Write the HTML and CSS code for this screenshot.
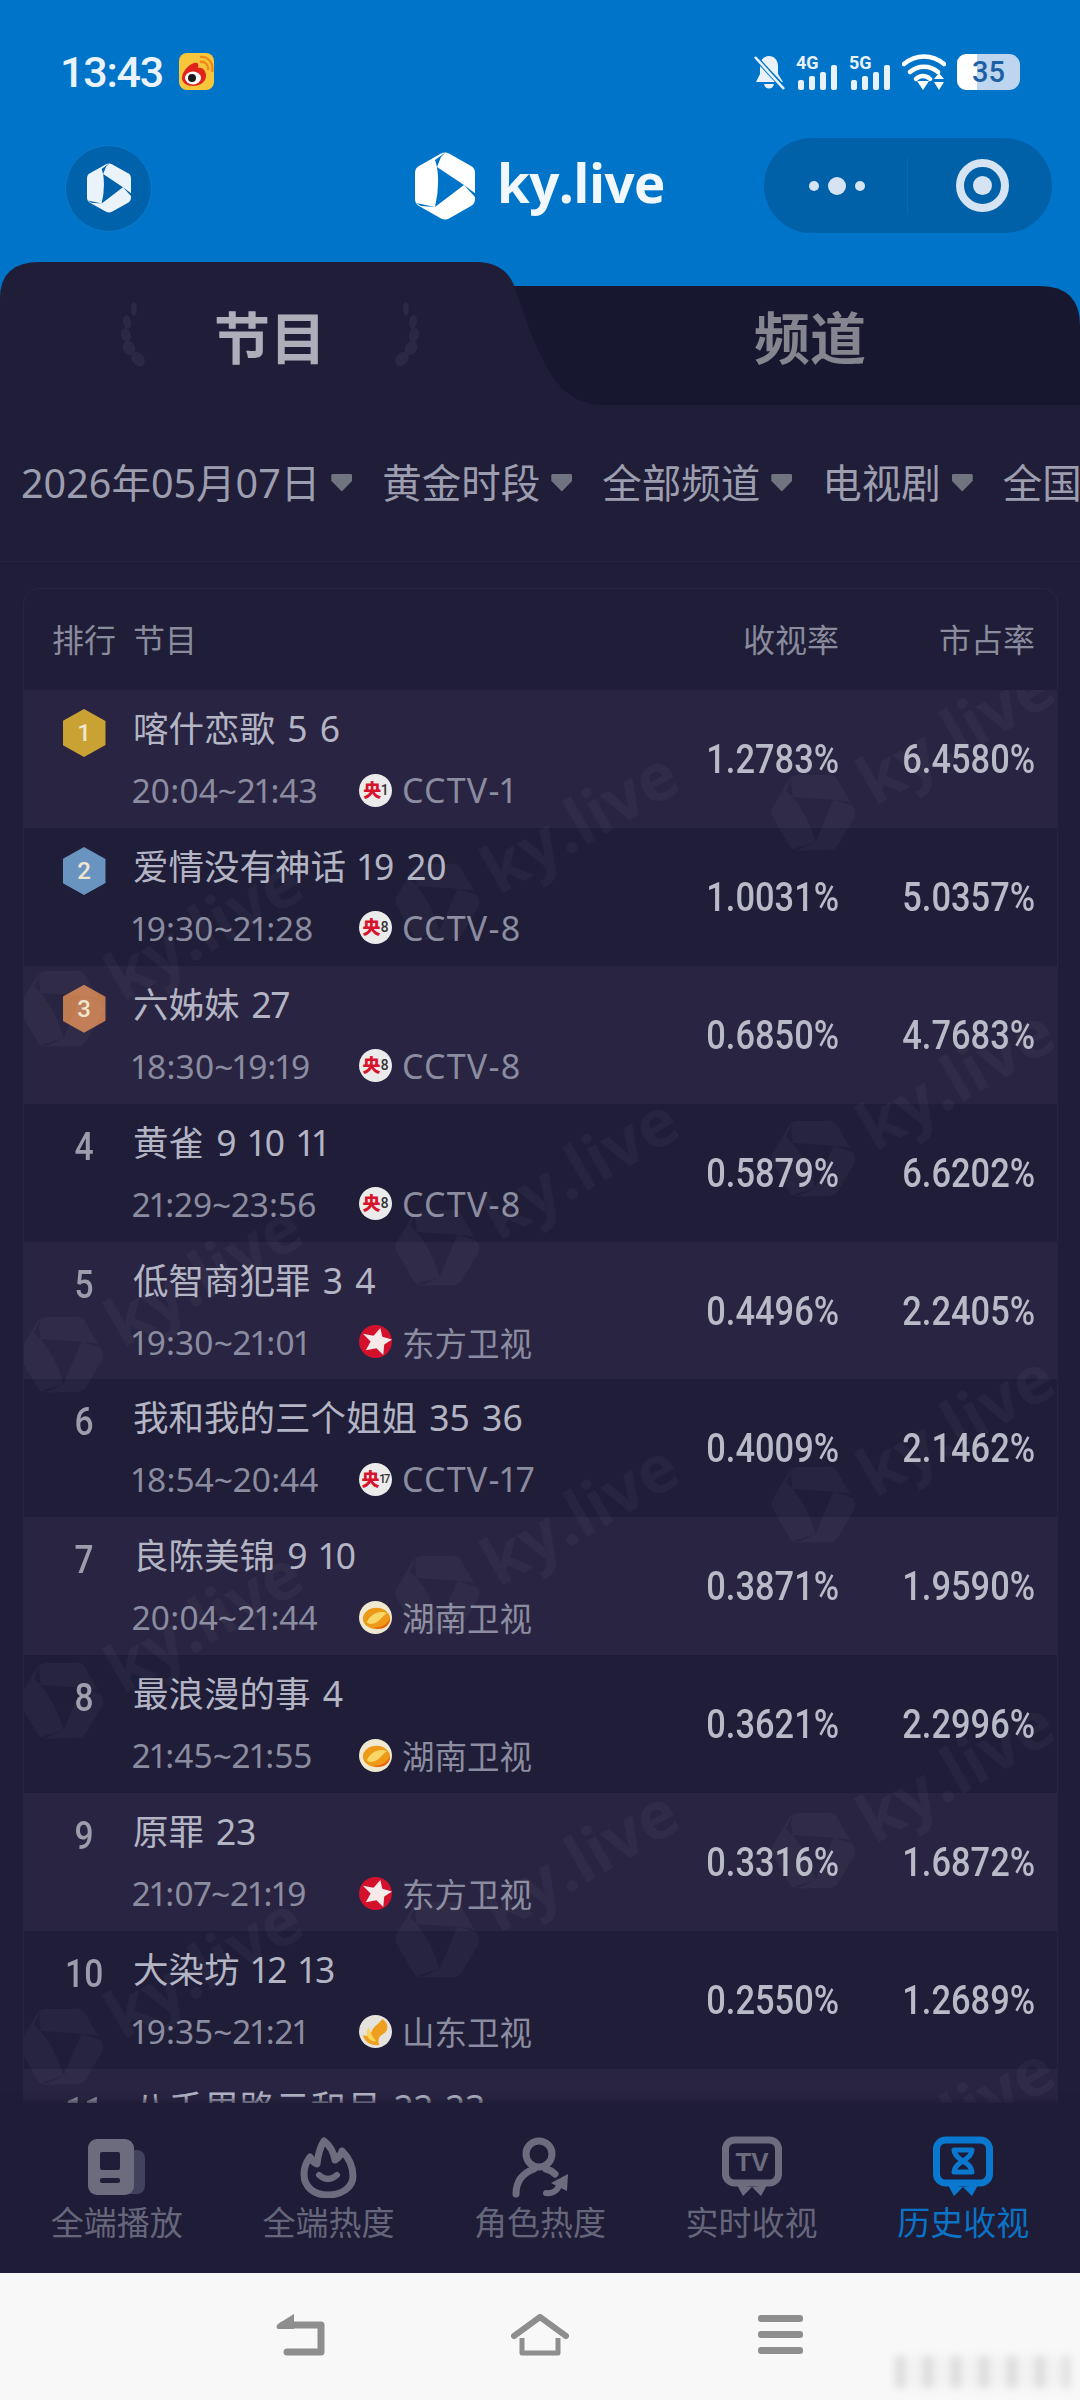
FILE: index.html
```html
<!DOCTYPE html>
<html lang="zh-CN">
<head>
    <meta charset="UTF-8">
    <meta name="viewport" content="width=device-width, initial-scale=1.0">
    <title>ky.live 历史收视</title>
    <link rel="stylesheet" href="styles.css">
</head>
<body>

<svg class="defs" width="0" height="0">
    <symbol id="logo" viewBox="0 0 60 68">
        <path fill="currentColor" fill-rule="evenodd" d="M26 1.5Q30 -.5 34 1.5L56 14Q60 16 60 21V47Q60 52 56 54L34 66.5Q30 68.5 26 66.5L4 54Q0 52 0 47V21Q0 16 4 14ZM22 15L49 33L20 55Q25 34 22 15ZM22 15L20 8L31 0L26 5ZM49 33L61 42V46ZM20 55L1 51L6 54Z"/>
    </symbol>
    <symbol id="star" viewBox="0 0 34 34">
        <circle cx="17" cy="17" r="17" fill="#d3112c"/>
        <path fill="#f6e9ea" d="M22 3L24 12L34 15L26 20L25 31L18 24L7 26L12 17L4 9L15 11Z"/>
    </symbol>
    <symbol id="mango" viewBox="0 0 34 34">
        <circle cx="17" cy="17" r="17" fill="#efe9d2"/>
        <ellipse cx="18" cy="18" rx="14" ry="11" fill="#ec9a17"/>
        <path fill="#f9d766" d="M8 22C12 13 22 9 29 13C25 14 22 21 16 23C13 24 10 24 8 22Z"/>
        <path fill="#e8650f" d="M15 27C23 28 30 24 32 17C33 25 24 32 15 27Z"/>
    </symbol>
    <symbol id="shandong" viewBox="0 0 34 34">
        <circle cx="17" cy="17" r="17" fill="#e6e2dc"/>
        <path fill="#ee9f1e" d="M24 4C31 8 31 17 24 20C20 22 19 27 21 31C12 32 5 27 4 20C8 23 12 21 13 17C15 11 20 10 24 4Z"/>
        <path fill="#f9d55a" d="M10 13C12 18 13 22 18 27C13 28 8 24 8 18C8 16 9 14 10 13Z"/>
    </symbol>
</svg>

<div class="page">

    <header class="top">
        <div class="status">
            <div class="status-left">
                <span class="clock">13:43</span>
                <svg class="weibo" viewBox="0 0 35 37">
                    <rect width="35" height="37" rx="8" fill="#f7c63a"/>
                    <path fill="#e0241b" d="M27 23C27 30 19 33 14 33C8 33 3 30 3 25C3 19 9 12 15 10C19 9 20 11 19 15C23 14 27 17 27 23Z"/>
                    <ellipse cx="14" cy="25" rx="8" ry="6.5" fill="#fff"/>
                    <circle cx="13" cy="25" r="4" fill="#1b1b1b"/>
                    <path fill="none" stroke="#f08a1d" stroke-width="2.4" d="M21 9C26 8 30 12 29 17M21 4C29 3 35 10 33 19"/>
                </svg>
            </div>
            <div class="status-right">
                <svg class="bell" viewBox="0 0 31 36">
                    <path fill="#e9f2fb" d="M15 2C20 2 24 6 24 12V20L29 28H2L6 20V12C6 6 10 2 15 2ZM10 30H20C19 36 11 36 10 30Z"/>
                    <path stroke="#0074c8" stroke-width="5" d="M0 2L30 34"/>
                    <path stroke="#e9f2fb" stroke-width="2.6" d="M1 3L30 35"/>
                </svg>
                <svg class="signal" viewBox="0 0 42 36">
                    <text class="net" x="0" y="15">4G</text>
                    <rect x="2" y="26" width="6" height="10" rx="2"/>
                    <rect x="13" y="22" width="6" height="14" rx="2"/>
                    <rect x="24" y="18" width="6" height="18" rx="2"/>
                    <rect x="35" y="11" width="6" height="25" rx="2"/>
                </svg>
                <svg class="signal" viewBox="0 0 42 36">
                    <text class="net" x="0" y="15">5G</text>
                    <rect x="2" y="26" width="6" height="10" rx="2"/>
                    <rect x="13" y="22" width="6" height="14" rx="2"/>
                    <rect x="24" y="18" width="6" height="18" rx="2"/>
                    <rect x="35" y="11" width="6" height="25" rx="2"/>
                </svg>
                <svg class="wifi" viewBox="0 0 44 36">
                    <path fill="none" stroke="#fff" stroke-width="4.4" stroke-linecap="round" d="M2 10C14 0 30 0 42 10M8 18C16 11 28 11 36 18M14 25C18 21 24 21 28 25"/>
                    <path fill="#fff" d="M15 27H27L21 36ZM32 25L37 19L42 25ZM32 28H42L37 36Z"/>
                </svg>
                <div class="battery"><span>35</span></div>
            </div>
        </div>

        <div class="appbar">
            <div class="app-round"><svg class="app-round-logo"><use href="#logo"/></svg></div>
            <div class="brand">
                <svg class="brand-logo"><use href="#logo"/></svg>
                <span class="brand-name">ky.live</span>
            </div>
            <div class="capsule">
                <div class="capsule-side">
                    <i class="dot"></i><i class="dot dot-big"></i><i class="dot"></i>
                </div>
                <div class="capsule-side capsule-right"><i class="target"></i></div>
            </div>
        </div>

        <div class="tabs">
            <svg class="tabs-bg" viewBox="0 0 1080 143">
                <path fill="#181730" d="M490 24H1040Q1080 24 1080 64V143H490Z"/>
                <path fill="#1f1d37" d="M0 143V36Q0 0 40 0H476Q503 0 513 21C525 50 531 82 555 118C568 136 585 143 606 143Z"/>
            </svg>
            <div class="tab tab-active">
                <svg class="laurel" viewBox="0 0 30 64">
                    <ellipse cx="16" cy="7" rx="3" ry="7"/>
                    <ellipse cx="9" cy="20" rx="4" ry="7" transform="rotate(-8 9 20)"/>
                    <ellipse cx="8" cy="33" rx="5" ry="7" transform="rotate(-15 8 33)"/>
                    <ellipse cx="11" cy="46" rx="6" ry="7.5" transform="rotate(-25 11 46)"/>
                    <ellipse cx="20" cy="57" rx="6" ry="8" transform="rotate(-40 20 57)"/>
                </svg>
                <span>节目</span>
                <svg class="laurel laurel-flip" viewBox="0 0 30 64">
                    <ellipse cx="16" cy="7" rx="3" ry="7"/>
                    <ellipse cx="9" cy="20" rx="4" ry="7" transform="rotate(-8 9 20)"/>
                    <ellipse cx="8" cy="33" rx="5" ry="7" transform="rotate(-15 8 33)"/>
                    <ellipse cx="11" cy="46" rx="6" ry="7.5" transform="rotate(-25 11 46)"/>
                    <ellipse cx="20" cy="57" rx="6" ry="8" transform="rotate(-40 20 57)"/>
                </svg>
            </div>
            <div class="tab">频道</div>
        </div>
    </header>

    <main class="content">
        <div class="filters">
            <div class="filter">2026年05月07日<i class="caret"></i></div>
            <div class="filter">黄金时段<i class="caret"></i></div>
            <div class="filter">全部频道<i class="caret"></i></div>
            <div class="filter">电视剧<i class="caret"></i></div>
            <div class="filter">全国</div>
        </div>

        <div class="table">
            <div class="thead">
                <div class="thead-left"><span class="thead-rank">排行</span><span>节目</span></div>
                <div class="num-head">收视率</div>
                <div class="num-head">市占率</div>
            </div>

            <div class="rows">
                <div class="row">
                    <div class="main">
                        <div class="rank"><span class="medal gold">1</span></div>
                        <div class="info">
                            <div class="title">喀什恋歌 5 6</div>
                            <div class="sub"><span class="time">20:04~21:43</span><span class="ch-logo"><b>央</b><i>1</i></span><span class="ch-en">CCTV-1</span></div>
                        </div>
                    </div>
                    <div class="num"><span>1.2783%</span></div>
                    <div class="num"><span>6.4580%</span></div>
                </div>
                <div class="row">
                    <div class="main">
                        <div class="rank"><span class="medal silver">2</span></div>
                        <div class="info">
                            <div class="title">爱情没有神话 19 20</div>
                            <div class="sub"><span class="time">19:30~21:28</span><span class="ch-logo"><b>央</b><i>8</i></span><span class="ch-en">CCTV-8</span></div>
                        </div>
                    </div>
                    <div class="num"><span>1.0031%</span></div>
                    <div class="num"><span>5.0357%</span></div>
                </div>
                <div class="row">
                    <div class="main">
                        <div class="rank"><span class="medal bronze">3</span></div>
                        <div class="info">
                            <div class="title">六姊妹 27</div>
                            <div class="sub"><span class="time">18:30~19:19</span><span class="ch-logo"><b>央</b><i>8</i></span><span class="ch-en">CCTV-8</span></div>
                        </div>
                    </div>
                    <div class="num"><span>0.6850%</span></div>
                    <div class="num"><span>4.7683%</span></div>
                </div>
                <div class="row">
                    <div class="main">
                        <div class="rank"><span>4</span></div>
                        <div class="info">
                            <div class="title">黄雀 9 10 11</div>
                            <div class="sub"><span class="time">21:29~23:56</span><span class="ch-logo"><b>央</b><i>8</i></span><span class="ch-en">CCTV-8</span></div>
                        </div>
                    </div>
                    <div class="num"><span>0.5879%</span></div>
                    <div class="num"><span>6.6202%</span></div>
                </div>
                <div class="row">
                    <div class="main">
                        <div class="rank"><span>5</span></div>
                        <div class="info">
                            <div class="title">低智商犯罪 3 4</div>
                            <div class="sub"><span class="time">19:30~21:01</span><svg class="ch-svg"><use href="#star"/></svg>东方卫视</div>
                        </div>
                    </div>
                    <div class="num"><span>0.4496%</span></div>
                    <div class="num"><span>2.2405%</span></div>
                </div>
                <div class="row">
                    <div class="main">
                        <div class="rank"><span>6</span></div>
                        <div class="info">
                            <div class="title">我和我的三个姐姐 35 36</div>
                            <div class="sub"><span class="time">18:54~20:44</span><span class="ch-logo"><b>央</b><i class="small">17</i></span><span class="ch-en">CCTV-17</span></div>
                        </div>
                    </div>
                    <div class="num"><span>0.4009%</span></div>
                    <div class="num"><span>2.1462%</span></div>
                </div>
                <div class="row">
                    <div class="main">
                        <div class="rank"><span>7</span></div>
                        <div class="info">
                            <div class="title">良陈美锦 9 10</div>
                            <div class="sub"><span class="time">20:04~21:44</span><svg class="ch-svg"><use href="#mango"/></svg>湖南卫视</div>
                        </div>
                    </div>
                    <div class="num"><span>0.3871%</span></div>
                    <div class="num"><span>1.9590%</span></div>
                </div>
                <div class="row">
                    <div class="main">
                        <div class="rank"><span>8</span></div>
                        <div class="info">
                            <div class="title">最浪漫的事 4</div>
                            <div class="sub"><span class="time">21:45~21:55</span><svg class="ch-svg"><use href="#mango"/></svg>湖南卫视</div>
                        </div>
                    </div>
                    <div class="num"><span>0.3621%</span></div>
                    <div class="num"><span>2.2996%</span></div>
                </div>
                <div class="row">
                    <div class="main">
                        <div class="rank"><span>9</span></div>
                        <div class="info">
                            <div class="title">原罪 23</div>
                            <div class="sub"><span class="time">21:07~21:19</span><svg class="ch-svg"><use href="#star"/></svg>东方卫视</div>
                        </div>
                    </div>
                    <div class="num"><span>0.3316%</span></div>
                    <div class="num"><span>1.6872%</span></div>
                </div>
                <div class="row">
                    <div class="main">
                        <div class="rank"><span>10</span></div>
                        <div class="info">
                            <div class="title">大染坊 12 13</div>
                            <div class="sub"><span class="time">19:35~21:21</span><svg class="ch-svg"><use href="#shandong"/></svg>山东卫视</div>
                        </div>
                    </div>
                    <div class="num"><span>0.2550%</span></div>
                    <div class="num"><span>1.2689%</span></div>
                </div>
                <div class="row">
                    <div class="main">
                        <div class="rank"><span>11</span></div>
                        <div class="info">
                            <div class="title">八千里路云和月 22 23</div>
                        </div>
                    </div>
                </div>

                <!-- watermark sits over the rows -->
                <div class="marks">
                    <div class="mark-col mark-col-a">
                        <div class="mark"><svg class="mark-logo"><use href="#logo"/></svg>ky.live</div>
                        <div class="mark"><svg class="mark-logo"><use href="#logo"/></svg>ky.live</div>
                        <div class="mark"><svg class="mark-logo"><use href="#logo"/></svg>ky.live</div>
                        <div class="mark"><svg class="mark-logo"><use href="#logo"/></svg>ky.live</div>
                    </div>
                    <div class="mark-col mark-col-b">
                        <div class="mark"><svg class="mark-logo"><use href="#logo"/></svg>ky.live</div>
                        <div class="mark"><svg class="mark-logo"><use href="#logo"/></svg>ky.live</div>
                        <div class="mark"><svg class="mark-logo"><use href="#logo"/></svg>ky.live</div>
                        <div class="mark"><svg class="mark-logo"><use href="#logo"/></svg>ky.live</div>
                    </div>
                    <div class="mark-col mark-col-c">
                        <div class="mark"><svg class="mark-logo"><use href="#logo"/></svg>ky.live</div>
                        <div class="mark"><svg class="mark-logo"><use href="#logo"/></svg>ky.live</div>
                        <div class="mark"><svg class="mark-logo"><use href="#logo"/></svg>ky.live</div>
                        <div class="mark"><svg class="mark-logo"><use href="#logo"/></svg>ky.live</div>
                        <div class="mark"><svg class="mark-logo"><use href="#logo"/></svg>ky.live</div>
                    </div>
                </div>
            </div>
        </div>
    </main>

    <nav class="tabbar">
        <div class="tabbar-item">
            <svg class="tabbar-icon" viewBox="0 0 60 62">
                <rect x="28" y="14" width="30" height="44" rx="8" fill="#43425c"/>
                <rect x="1" y="3" width="46" height="56" rx="9" fill="#6d6c7f"/>
                <rect x="13" y="16" width="20" height="18" rx="2" fill="#201d38"/>
                <rect x="13" y="42" width="20" height="5" rx="2" fill="#201d38"/>
            </svg>
            <span>全端播放</span>
        </div>
        <div class="tabbar-item">
            <svg class="tabbar-icon" viewBox="0 0 60 62">
                <path fill="none" stroke="#6d6c7f" stroke-width="7" stroke-linejoin="round" d="M26 5C34 11 36 18 37 24C41 22 43 18 44 15C51 22 55 31 55 40C55 52 43 59 30 59C17 59 6 52 6 38C6 31 9 25 12 21C14 25 16 27 19 28C20 19 22 11 26 5Z"/>
                <path fill="none" stroke="#6d6c7f" stroke-width="6" stroke-linecap="round" d="M21 39Q30 47 39 39"/>
            </svg>
            <span>全端热度</span>
        </div>
        <div class="tabbar-item">
            <svg class="tabbar-icon" viewBox="0 0 60 62">
                <circle cx="29" cy="18" r="13" fill="none" stroke="#6d6c7f" stroke-width="7"/>
                <path fill="none" stroke="#6d6c7f" stroke-width="7" stroke-linecap="round" d="M6 58C6 45 13 37 24 33M36 33C40 34 43 36 45 38"/>
                <path fill="none" stroke="#6d6c7f" stroke-width="6" stroke-linecap="round" d="M36 57C44 58 49 53 50 46"/>
                <path fill="#6d6c7f" d="M41 47L58 38L57 55Z"/>
            </svg>
            <span>角色热度</span>
        </div>
        <div class="tabbar-item">
            <svg class="tabbar-icon" viewBox="0 0 60 62">
                <rect x="3.5" y="4" width="53" height="43" rx="9" fill="none" stroke="#6d6c7f" stroke-width="7"/>
                <text class="tv-text" x="30" y="35">TV</text>
                <path fill="#6d6c7f" d="M30 51L15 49L21 60ZM30 51L45 49L39 60Z"/>
            </svg>
            <span>实时收视</span>
        </div>
        <div class="tabbar-item tabbar-active">
            <svg class="tabbar-icon" viewBox="0 0 60 62">
                <rect x="3.5" y="4" width="53" height="43" rx="9" fill="none" stroke="#0a78cf" stroke-width="7"/>
                <path fill="none" stroke="#0a78cf" stroke-width="5" stroke-linejoin="round" d="M21 14H39C39 19 35 22 30 25C35 28 39 31 39 36H21C21 31 25 28 30 25C25 22 21 19 21 14Z"/>
                <path fill="#0a78cf" d="M30 51L15 49L21 60ZM30 51L45 49L39 60Z"/>
            </svg>
            <span>历史收视</span>
        </div>
    </nav>

    <div class="sysbar">
        <div class="sys-cell">
            <svg class="sys-back" viewBox="0 0 50 42">
                <path fill="none" stroke="#8e8e8e" stroke-width="7" stroke-linecap="round" stroke-linejoin="round" d="M8 11H46V38H12"/>
                <path fill="#8e8e8e" d="M19 0V15H3Q0 13 3 10Z"/>
            </svg>
        </div>
        <div class="sys-cell">
            <svg class="sys-home" viewBox="0 0 58 42">
                <path fill="none" stroke="#8e8e8e" stroke-width="6" stroke-linecap="round" stroke-linejoin="round" d="M3 22L29 3L55 22"/>
                <path fill="none" stroke="#8e8e8e" stroke-width="5" stroke-linejoin="round" d="M11 24V39H47V24"/>
            </svg>
        </div>
        <div class="sys-cell">
            <div class="sys-menu"><i></i><i></i><i></i></div>
        </div>
        <div class="smudge"></div>
    </div>

</div>

</body>
</html>
```

FILE: styles.css
```css
* {
    box-sizing: border-box;
}
body {
    margin: 0;
    background: #1f1d37;
    font-family: "Noto Sans", "Noto Sans CJK SC", sans-serif;
}
i {
    font-style: normal;
}
.defs {
    position: absolute;
}
.page {
    width: 1080px;
    height: 2400px;
    display: flex;
    flex-direction: column;
    overflow: hidden;
    background: #1f1d37;
}

/* blue header */
.top {
    background: #0074c8;
    padding-top: 53px;
}
.status {
    height: 37px;
    margin-bottom: 48px;
    padding: 0 60px;
    display: flex;
    justify-content: space-between;
    align-items: center;
}
.status-left {
    display: flex;
    align-items: center;
    gap: 16px;
}
.clock {
    font-family: Roboto, sans-serif;
    font-size: 43px;
    font-weight: 500;
    letter-spacing: -1.2px;
    color: #eaf3fb;
}
.weibo {
    width: 35px;
    height: 37px;
}
.status-right {
    display: flex;
    align-items: center;
    gap: 11px;
}
.bell {
    width: 31px;
    height: 36px;
}
.signal {
    width: 42px;
    height: 36px;
    fill: #e9f2fb;
    overflow: visible;
}
.net {
    font-family: Roboto, sans-serif;
    font-size: 18px;
    font-weight: 700;
}
.wifi {
    width: 44px;
    height: 36px;
}
.battery {
    width: 63px;
    height: 36px;
    border-radius: 9px 11px 11px 9px;
    background: linear-gradient(90deg, #fff 32%, #bdd5ee 32%);
    color: #1c5fa4;
    font-family: Roboto, sans-serif;
    font-size: 29px;
    font-weight: 500;
    line-height: 36px;
    text-align: center;
}

.appbar {
    height: 95px;
    margin-bottom: 29px;
    padding-right: 28px;
    display: flex;
    align-items: center;
}
.app-round {
    width: 87px;
    height: 87px;
    margin: 5px 0 0 65px;
    border-radius: 50%;
    background: #0062aa;
    border: 1px solid #0a7ccd;
    display: flex;
    align-items: center;
    justify-content: center;
    color: #eaf2fa;
}
.app-round-logo {
    width: 44px;
    height: 50px;
}
.brand {
    margin-left: 263px;
    display: flex;
    align-items: center;
    gap: 22px;
    color: #fff;
}
.brand-logo {
    width: 60px;
    height: 68px;
}
.brand-name {
    margin-top: -5px;
    font-family: "Open Sans", sans-serif;
    font-size: 53px;
    font-weight: 700;
    line-height: 68px;
    letter-spacing: -0.6px;
    color: #f2f7fc;
}
.capsule {
    width: 288px;
    height: 95px;
    margin-left: auto;
    border-radius: 48px;
    background: #0061a8;
    display: flex;
    align-items: center;
}
.capsule-side {
    width: 143px;
    height: 56px;
    display: flex;
    align-items: center;
    justify-content: center;
    gap: 9px;
    padding-left: 2px;
}
.capsule-right {
    width: 145px;
    border-left: 1px solid #0a69af;
    padding-left: 4px;
}
.dot {
    width: 10px;
    height: 10px;
    border-radius: 50%;
    background: #d5e3f2;
}
.dot-big {
    width: 18px;
    height: 18px;
}
.target {
    width: 53px;
    height: 53px;
    border-radius: 50%;
    border: 8px solid #d5e3f2;
    display: flex;
    align-items: center;
    justify-content: center;
}
.target::after {
    content: "";
    width: 19px;
    height: 19px;
    border-radius: 50%;
    background: #d5e3f2;
}

.tabs {
    position: relative;
    height: 143px;
    padding-top: 1px;
    display: flex;
    align-items: center;
}
.tabs-bg {
    position: absolute;
    left: 0;
    top: 0;
    width: 1080px;
    height: 143px;
}
.tab {
    position: relative;
    width: 540px;
    display: flex;
    align-items: center;
    justify-content: center;
    gap: 66px;
    font-size: 56px;
    font-weight: 700;
    color: #85858f;
}
.tab-active {
    color: #adaeba;
}
.laurel {
    width: 30px;
    height: 64px;
    fill: #2a2845;
}
.laurel-flip {
    transform: scaleX(-1);
}

/* filters and table */
.content {
    flex: 1;
    min-height: 0;
    display: flex;
    flex-direction: column;
}
.filters {
    height: 157px;
    flex: none;
    padding: 0 0 5px 21px;
    display: flex;
    align-items: center;
    gap: 30px;
    white-space: nowrap;
    overflow: hidden;
    border-bottom: 1px solid #252340;
}
.filter {
    display: flex;
    align-items: center;
    gap: 11px;
    font-size: 39.5px;
    color: #9c9daf;
}
.caret {
    width: 21px;
    height: 18px;
    margin-top: 4px;
    background: #6f7480;
    clip-path: polygon(0 8%, 8% 0, 92% 0, 100% 8%, 100% 40%, 50% 100%, 0 40%);
}
.table {
    flex: 1;
    min-height: 0;
    margin: 26px 22px 0 23px;
    border: 1px solid #272541;
    border-bottom: 0;
    border-radius: 16px 16px 0 0;
    display: flex;
    flex-direction: column;
    overflow: hidden;
}
.thead {
    height: 101px;
    flex: none;
    padding: 0 22px 3px 28px;
    display: grid;
    grid-template-columns: 1fr 196px 196px;
    align-items: center;
    font-size: 32px;
    color: #8a8b9c;
}
.thead-left {
    display: flex;
}
.thead-rank {
    width: 81px;
}
.num-head {
    text-align: right;
}
.rows {
    position: relative;
    flex: 1;
    overflow: hidden;
}
.row {
    height: 137.9px;
    padding: 0 22px 0 28px;
    display: grid;
    grid-template-columns: 1fr 196px 196px;
    align-items: center;
}
.row:nth-child(odd) {
    background: #292441;
}
.main {
    align-self: start;
    display: flex;
}
.rank {
    width: 64px;
    height: 48px;
    margin: 19px 17px 0 0;
    display: flex;
    align-items: center;
    justify-content: center;
    font-family: Roboto, sans-serif;
    font-size: 39px;
    font-weight: 500;
    color: #9c9dac;
}
.rank > span {
    display: inline-block;
    transform: scaleX(0.86);
}
.rank > .medal {
    width: 43px;
    height: 48px;
    display: flex;
    align-items: center;
    justify-content: center;
    clip-path: polygon(50% 0, 100% 25%, 100% 75%, 50% 100%, 0 75%, 0 25%);
    font-size: 24px;
    color: #efe6cf;
    transform: none;
}
.gold {
    background: #c9a233;
}
.silver {
    background: #6a94c0;
}
.bronze {
    background: #c07a50;
}
.info {
    padding-top: 16px;
    font-variant-numeric: proportional-nums;
}
.title {
    height: 44px;
    font-size: 35.5px;
    line-height: 44px;
    word-spacing: 3px;
    color: #b3b4c4;
    white-space: nowrap;
}
.sub {
    height: 40px;
    margin-top: 20px;
    display: flex;
    align-items: center;
    font-size: 32.5px;
    color: #8b8ca0;
    white-space: nowrap;
}
.time {
    width: 227px;
    margin-left: -1px;
    font-size: 33.5px;
}
.ch-logo {
    width: 33px;
    height: 33px;
    margin-right: 10px;
    border-radius: 50%;
    background: #ecebeb;
    display: flex;
    align-items: center;
    justify-content: center;
    font-family: Roboto, "Noto Sans CJK SC", sans-serif;
    line-height: 33px;
}
.ch-logo b {
    font-size: 18px;
    font-weight: 900;
    color: #d8142c;
}
.ch-logo i {
    font-size: 14px;
    font-weight: 500;
    color: #333;
}
.ch-logo i.small {
    font-size: 12px;
    letter-spacing: -1px;
}
.ch-en {
    font-size: 34px;
    letter-spacing: 1.2px;
}
.ch-svg {
    width: 33px;
    height: 33px;
    margin-right: 10px;
}
.num {
    text-align: right;
    font-family: Roboto, sans-serif;
    font-size: 41px;
    font-weight: 500;
    color: #b9bac8;
}
.num span {
    display: inline-block;
    transform: scaleX(0.84);
    transform-origin: right center;
}

/* ky.live watermark */
.marks {
    position: absolute;
    left: -50px;
    top: 0;
    display: flex;
    align-items: flex-start;
    pointer-events: none;
}
.mark-col {
    width: 376px;
}
.mark-col-a {
    margin-top: 87px;
}
.mark-col-b {
    margin-top: -20px;
}
.mark-col-c {
    margin-top: -109px;
}
.mark {
    height: 346px;
    display: flex;
    align-items: center;
    justify-content: center;
    gap: 18px;
    transform: rotate(-30deg);
    font-family: "Open Sans", sans-serif;
    font-size: 66px;
    font-weight: 700;
    color: rgba(255, 255, 255, 0.035);
}
.mark-logo {
    width: 75px;
    height: 85px;
}

/* bottom nav */
.tabbar {
    position: relative;
    height: 170px;
    flex: none;
    padding: 33px 11px 0;
    display: grid;
    grid-template-columns: repeat(5, 1fr);
    background: #1f1c37;
    box-shadow: 0 -3px 6px rgba(30, 28, 54, 0.7);
}
.tabbar-item {
    display: flex;
    flex-direction: column;
    align-items: center;
    gap: 5px;
    font-size: 33px;
    line-height: 40px;
    color: #66667a;
}
.tabbar-icon {
    width: 60px;
    height: 62px;
}
.tabbar-active {
    color: #0a73c6;
}
.tv-text {
    font-family: "Liberation Sans", sans-serif;
    font-size: 26px;
    font-weight: 700;
    text-anchor: middle;
    fill: #6d6c7f;
}

/* system bar */
.sysbar {
    position: relative;
    height: 127px;
    flex: none;
    padding: 0 180px 4px;
    display: grid;
    grid-template-columns: repeat(3, 1fr);
    align-items: center;
    background: #f8f8f8;
}
.sys-cell {
    display: flex;
    justify-content: center;
}
.sys-back {
    width: 50px;
    height: 42px;
}
.sys-home {
    width: 58px;
    height: 42px;
}
.sys-menu {
    width: 45px;
    display: flex;
    flex-direction: column;
    gap: 9px;
}
.sys-menu i {
    height: 7px;
    border-radius: 3px;
    background: #8e8e8e;
}
.smudge {
    position: absolute;
    left: 895px;
    bottom: 12px;
    width: 175px;
    height: 32px;
    background: repeating-linear-gradient(90deg, #cfcfcf 0 10px, #f1f1f1 10px 28px);
    filter: blur(4px);
    opacity: 0.7;
}
```
